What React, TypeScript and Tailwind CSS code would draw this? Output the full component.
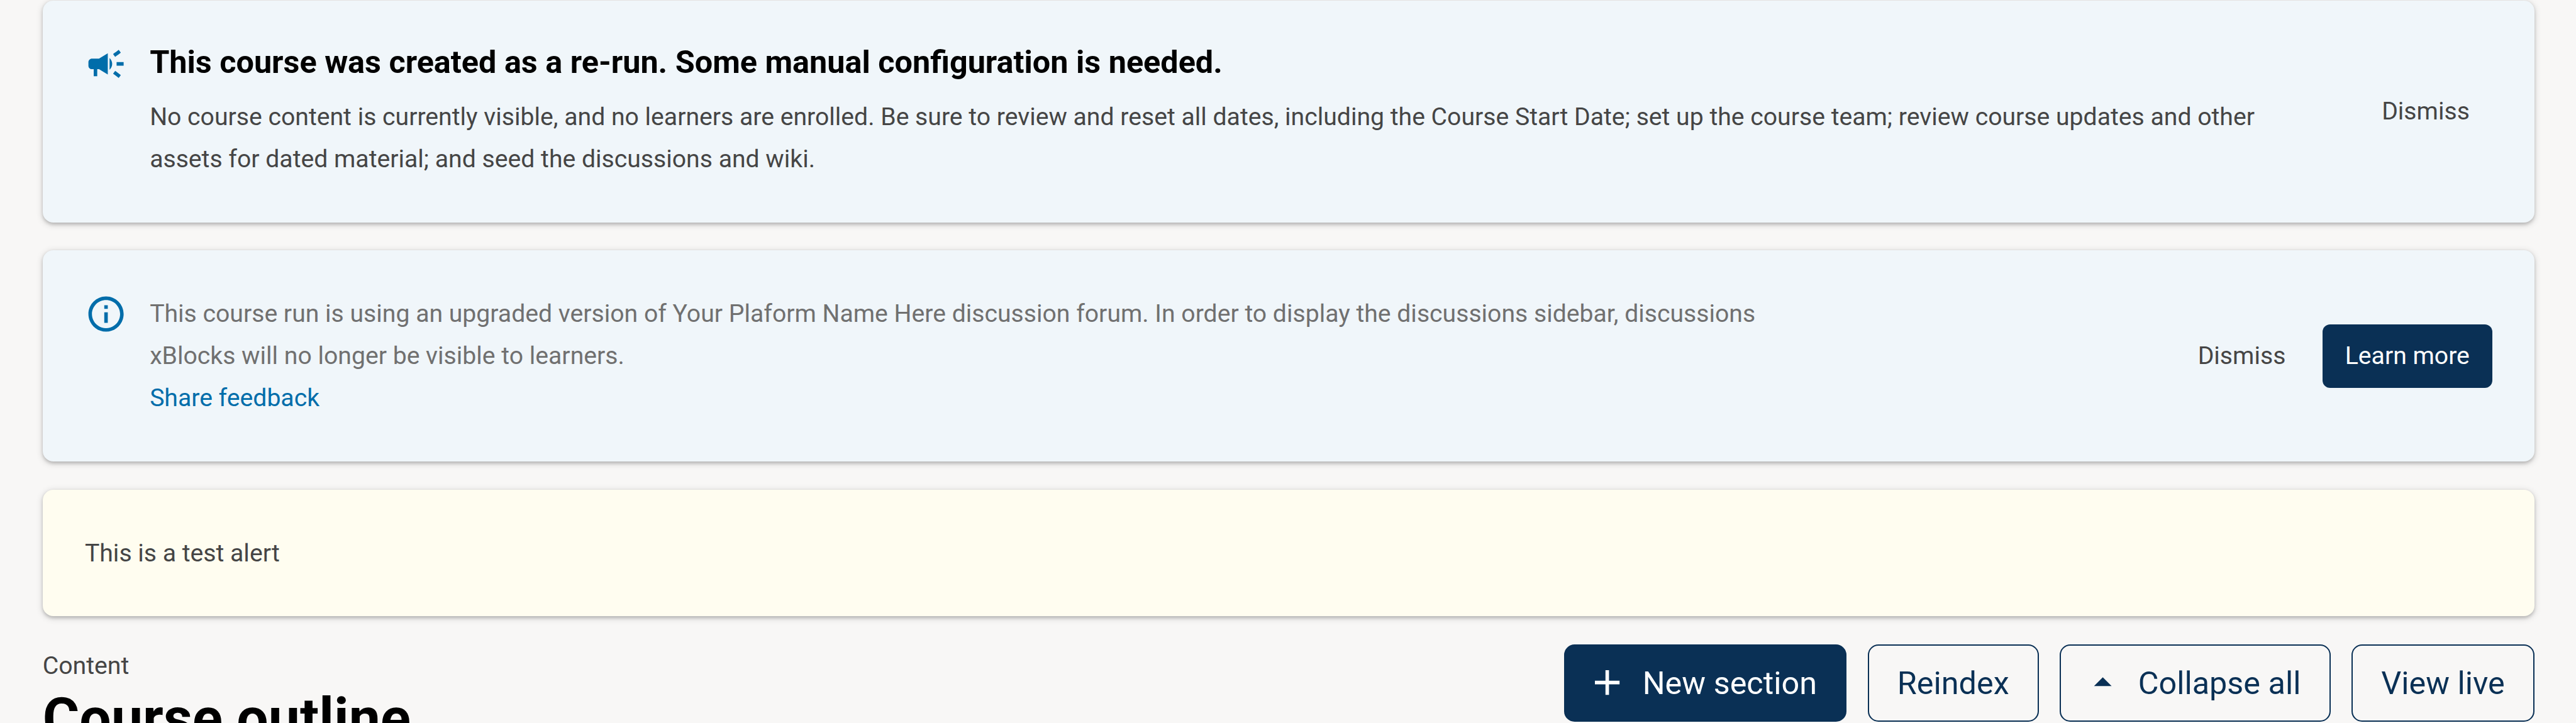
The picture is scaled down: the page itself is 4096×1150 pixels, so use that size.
import type { ReactNode } from "react";
import { MdAdd, MdArrowDropUp, MdCampaign, MdInfoOutline } from "react-icons/md";

const cardShadow =
  "rounded-[16.8px] shadow-[0_2.8px_5.6px_rgba(0,0,0,0.17),0_2.8px_11.2px_rgba(0,0,0,0.16)]";

function InfoCard({
  height,
  icon,
  actions,
  children,
}: {
  height: string;
  icon: ReactNode;
  actions: ReactNode;
  children: ReactNode;
}) {
  return (
    <section className={`flex shrink-0 bg-[#f0f6fa] p-[67.15px] ${height} ${cardShadow}`}>
      <div className="mr-[36px] size-[67.2px] shrink-0 text-[#006daa]">{icon}</div>
      <div className="flex-1 whitespace-nowrap pt-[0.5px]">{children}</div>
      <div className="flex items-center gap-[22.4px] self-center pt-[0.4px]">{actions}</div>
    </section>
  );
}

function SmallButton({ primary, children }: { primary?: boolean; children: ReactNode }) {
  return (
    <button
      className={
        primary
          ? "h-[100.3px] rounded-[12px] bg-[#0a3055] px-[36px] text-white"
          : "h-[100.3px] px-[36px] text-[#454545]"
      }
    >
      {children}
    </button>
  );
}

function HeaderButton({
  primary,
  icon,
  children,
}: {
  primary?: boolean;
  icon?: ReactNode;
  children: ReactNode;
}) {
  return (
    <button
      className={`flex h-[123px] items-center gap-[22.4px] whitespace-nowrap rounded-[16.8px] border-2 border-[#0a3055] pr-[45.2px] text-[50.37px] ${
        icon ? "pl-[32.7px]" : "pl-[45px]"
      } ${primary ? "bg-[#0a3055] text-white" : "text-[#0a3055]"}`}
    >
      {icon}
      {children}
    </button>
  );
}

export default function App() {
  return (
    <main className="flex h-[1150px] w-[4096px] flex-col gap-[44.8px] overflow-hidden bg-[#f8f7f6] pt-[1px] pr-[66px] pl-[67.8px] font-['Roboto',sans-serif] text-[39.17px] leading-[67.15px] text-[#454545]">
      <InfoCard
        height="h-[352.6px]"
        icon={<MdCampaign className="size-full" />}
        actions={<SmallButton>Dismiss</SmallButton>}
      >
        <h4 className="mb-[22.9px] -mt-[0.5px] text-[50.37px] leading-[61.55px] font-bold text-black">
          This course was created as a re-run. Some manual configuration is needed.
        </h4>
        <p>
          No course content is currently visible, and no learners are enrolled. Be sure to review
          and reset all dates, including the Course Start Date; set up the course team; review
          course updates and other
          <br />
          assets for dated material; and seed the discussions and wiki.
        </p>
      </InfoCard>

      <InfoCard
        height="h-[335.8px]"
        icon={<MdInfoOutline className="size-full" />}
        actions={
          <>
            <SmallButton>Dismiss</SmallButton>
            <SmallButton primary>Learn more</SmallButton>
          </>
        }
      >
        <p className="text-[#707070]">
          This course run is using an upgraded version of Your Plaform Name Here discussion forum.
          In order to display the discussions sidebar, discussions
          <br />
          xBlocks will no longer be visible to learners.
        </p>
        <a className="block text-[#006daa]">Share feedback</a>
      </InfoCard>

      <section className={`h-[201.5px] shrink-0 bg-[#fffdf0] p-[67.15px] pt-[68px] ${cardShadow}`}>
        This is a test alert
      </section>

      <header className="flex items-start justify-between">
        <div className="pt-[0.7px]">
          <small className="block text-[39.17px]">Content</small>
          <h2 className="text-[89.5px] leading-[100.7px] font-bold text-black">Course outline</h2>
        </div>
        <div className="flex gap-[33.6px]">
          <HeaderButton primary icon={<MdAdd className="size-[67.2px] -translate-y-px" />}>
            New section
          </HeaderButton>
          <HeaderButton>Reindex</HeaderButton>
          <HeaderButton icon={<MdArrowDropUp className="size-[67.2px] -translate-y-px" />}>
            Collapse all
          </HeaderButton>
          <HeaderButton>View live</HeaderButton>
        </div>
      </header>
    </main>
  );
}
